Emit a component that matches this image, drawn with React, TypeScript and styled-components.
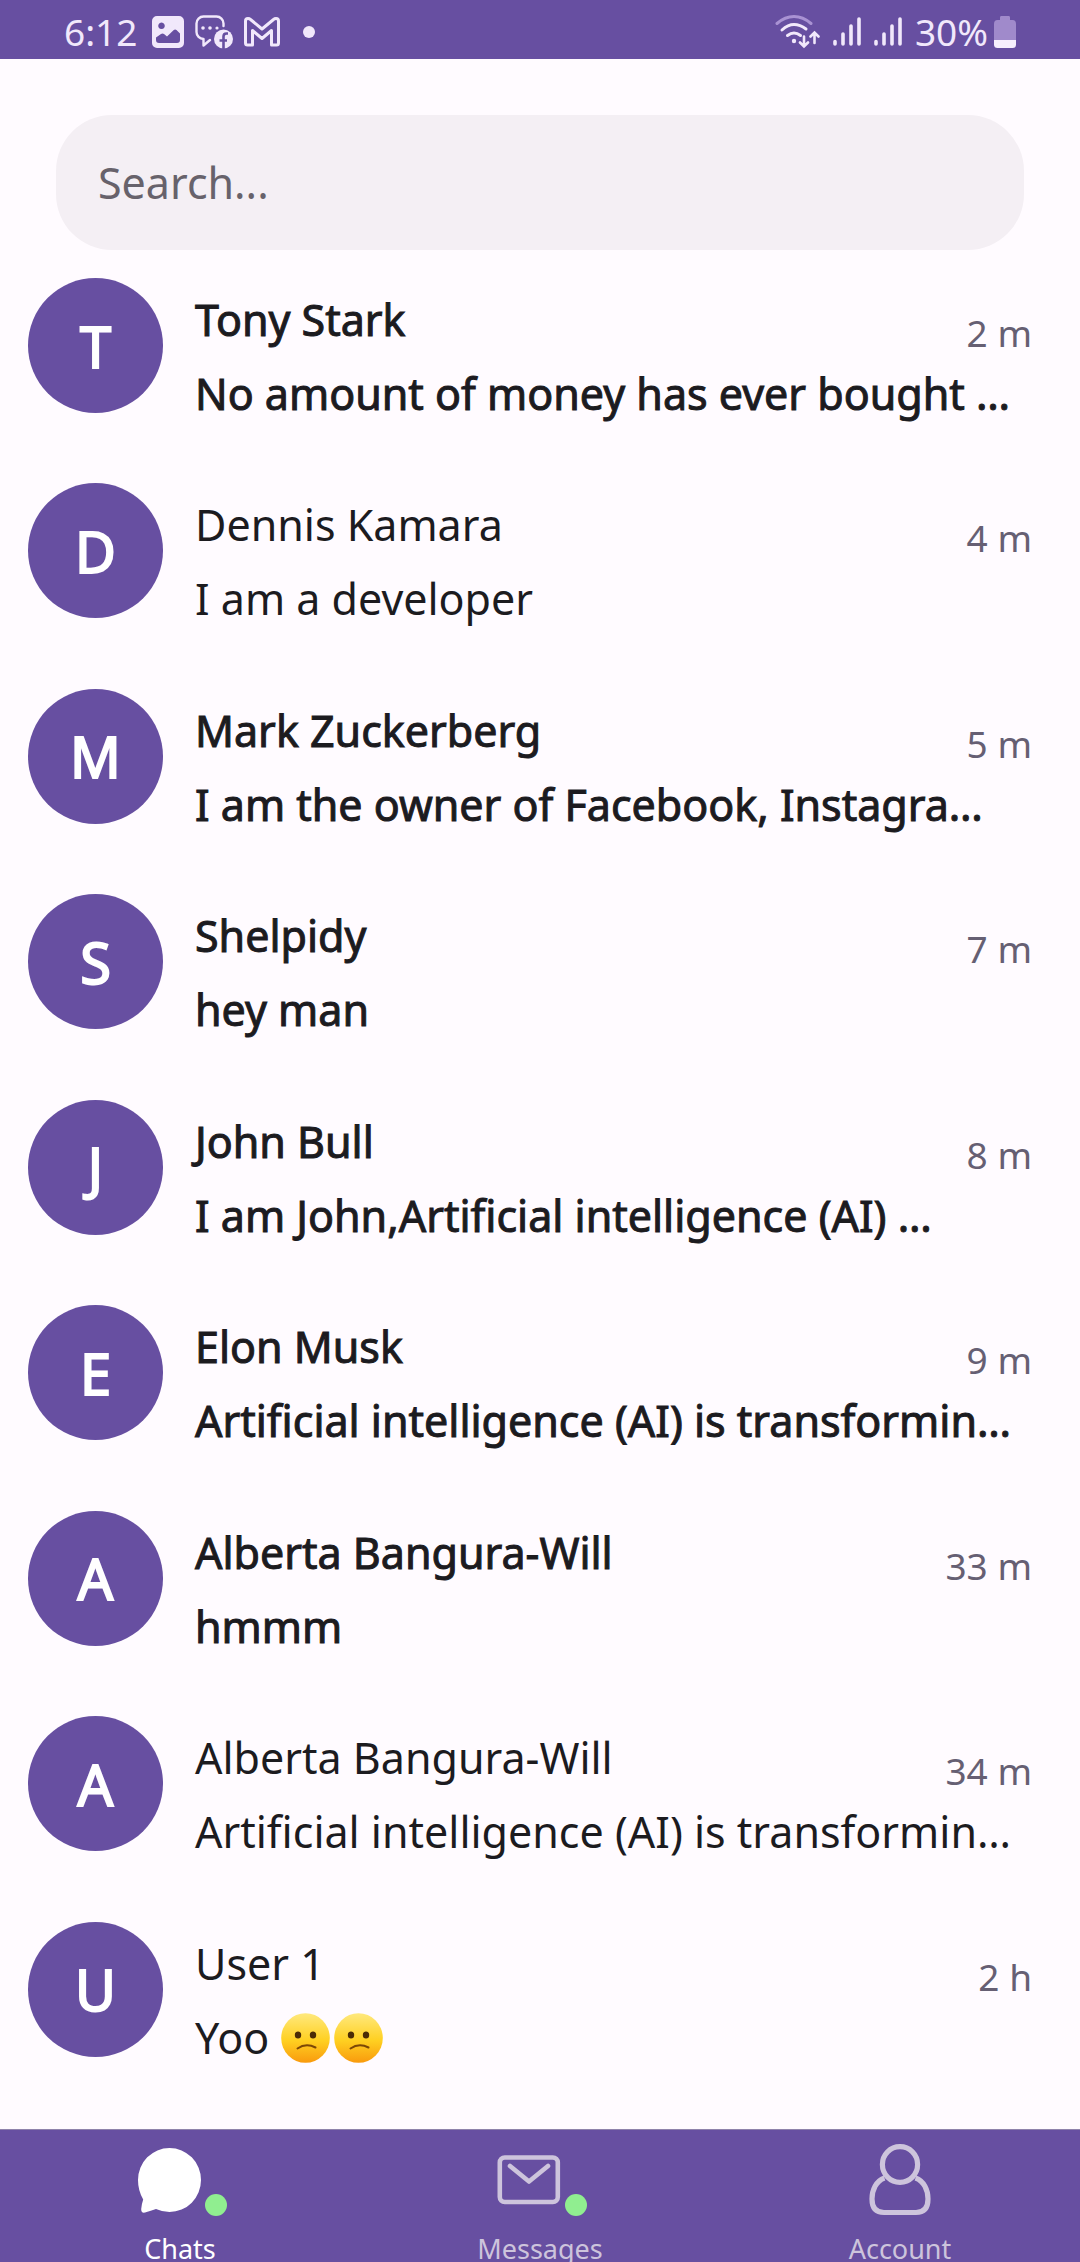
import React from "react";
import styled, { createGlobalStyle } from "styled-components";

const color = {
  primary: "#674fa1",
  surface: "#fffbff",
  field: "#f4eff4",
  text: "#1c1b1f",
  muted: "#665f73",
  placeholder: "#67626b",
  status: "#f1e8fb",
  inactive: "#cdc4dc",
  badge: "#90ee90",
};

const GlobalStyle = createGlobalStyle`
  * { box-sizing: border-box; }
  body {
    margin: 0;
    background: ${color.surface};
    color: ${color.text};
    font-family: "Noto Sans", "Open Sans", sans-serif;
  }
`;

const Screen = styled.div`
  display: flex;
  flex-direction: column;
  height: 100vh;
  overflow: hidden;
`;

const StatusBar = styled.header`
  flex: none;
  display: flex;
  justify-content: space-between;
  align-items: center;
  height: 59px;
  padding: 4px 64px 0;
  background: ${color.primary};
  color: ${color.status};
  font-size: 37px;
  line-height: 52px;
`;

const StatusGroup = styled.div<{ $gap: number }>`
  display: flex;
  align-items: center;
  gap: ${(p) => p.$gap}px;

  svg {
    display: block;
  }
`;

const Clock = styled.time`
  margin-right: 4px;
`;

const MoreDot = styled.span`
  width: 12px;
  height: 12px;
  margin-left: 12px;
  border-radius: 50%;
  background: ${color.status};
`;

const SearchForm = styled.form`
  flex: none;
  padding: 56px 56px 28px;
`;

const SearchInput = styled.input`
  display: block;
  width: 100%;
  height: 135px;
  padding: 0 42px;
  border: 0;
  border-radius: 56px;
  outline: 0;
  background: ${color.field};
  color: ${color.text};
  font-family: inherit;
  font-size: 43px;

  &::placeholder {
    color: ${color.placeholder};
    opacity: 1;
  }
`;

const ChatList = styled.ul`
  flex: 1;
  display: flex;
  flex-direction: column;
  min-height: 0;
  margin: 0;
  padding: 0 0 2px;
  list-style: none;
`;

const ChatItem = styled.li`
  flex: 1;
`;

const ChatLink = styled.a`
  display: flex;
  gap: 32px;
  padding: 0 48px 0 28px;
  color: inherit;
  text-decoration: none;
`;

const Avatar = styled.span`
  flex: none;
  display: grid;
  place-items: center;
  width: 135px;
  height: 135px;
  border-radius: 50%;
  background: ${color.primary};
  color: #fff;
  font-size: 56px;
  line-height: 76px;
  -webkit-text-stroke: 2px #fff;
`;

const ChatBody = styled.span<{ $unread: boolean }>`
  flex: 1;
  min-width: 0;
  padding-top: 5px;
  font-size: 43px;
  line-height: 74px;
  white-space: nowrap;
  -webkit-text-stroke: ${(p) => (p.$unread ? "1px" : "0")} ${color.text};
`;

const ChatHeader = styled.span`
  display: flex;
  justify-content: space-between;
`;

const ChatTime = styled.time`
  align-self: flex-end;
  color: ${color.muted};
  font-size: 37px;
  line-height: 48px;
  -webkit-text-stroke: 0;
`;

const Message = styled.span`
  display: flex;
  align-items: center;
`;

const EmojiRow = styled.span`
  display: flex;
  gap: 4px;
  margin-left: 12px;
`;

const Nav = styled.nav`
  flex: none;
  display: flex;
  height: 133px;
  border-top: 1px solid #8f83ab;
  background: ${color.primary};
`;

const NavButton = styled.button<{ $active: boolean }>`
  flex: 1;
  display: flex;
  flex-direction: column;
  align-items: center;
  justify-content: flex-start;
  gap: 20px;
  padding: 14px 0 0;
  border: 0;
  background: none;
  color: ${(p) => (p.$active ? "#fff" : color.inactive)};
  font-family: inherit;
  font-size: 27px;
  line-height: 26px;
`;

const NavIcon = styled.span`
  display: flex;
  align-items: flex-end;

  svg {
    display: block;
  }
`;

const NavBadge = styled.span`
  width: 22px;
  height: 22px;
  border-radius: 50%;
  background: ${color.badge};
`;

const PictureIcon = () => (
  <svg width="32" height="32" viewBox="0 0 32 32" aria-hidden="true">
    <path
      fill={color.status}
      fillRule="evenodd"
      d="M5 0h22a5 5 0 0 1 5 5v22a5 5 0 0 1-5 5H5a5 5 0 0 1-5-5V5a5 5 0 0 1 5-5zM9.500 6.500a3.300 3.300 0 1 0 .01 0zM4 21.500v2.500a3 3 0 0 0 3 3h18a3 3 0 0 0 3-3v-6.500l-3.500-3.500q-1.500-1.200-3 .3L15 20.500l-3-2.500q-1.500-1-3 0z"
    />
  </svg>
);

const ChatFacebookIcon = () => (
  <svg width="38" height="34" viewBox="0 0 38 34" aria-hidden="true">
    <path
      d="M28.500 11V8.500a7 7 0 0 0-7-7H8.500a7 7 0 0 0-7 7v8.500a7 7 0 0 0 7 7v6.500l6.500-5.500"
      fill="none"
      stroke={color.status}
      strokeWidth="2.400"
      strokeLinecap="round"
      strokeLinejoin="round"
    />
    <g fill={color.status}>
      <circle cx="8" cy="13" r="1.800" />
      <circle cx="15" cy="13" r="1.800" />
      <circle cx="22" cy="13" r="1.600" />
      <circle cx="28.500" cy="24" r="9.500" />
    </g>
    <path
      d="M33 18.500h-1.500q-3 0-3 3V34M24.500 25.500h7.500"
      fill="none"
      stroke={color.primary}
      strokeWidth="2.600"
    />
  </svg>
);

const MailLogoIcon = () => (
  <svg width="36" height="30" viewBox="0 0 36 30" aria-hidden="true">
    <path
      d="M1.500 26V4q0-2.500 2.500-2.500 1.500 0 2.500 1l11.500 9.500 11.500-9.500q1-1 2.500-1 2.500 0 2.500 2.500v22q0 2-2 2h-5V13.500L18 21.500 8.500 13.500V28h-5q-2 0-2-2z"
      fill="none"
      stroke={color.status}
      strokeWidth="3"
      strokeLinejoin="round"
    />
  </svg>
);

const WifiIcon = () => (
  <svg width="45" height="34" viewBox="0 0 45 34" aria-hidden="true">
    <g fill="none" strokeLinecap="round" stroke={color.status} strokeWidth="3">
      <path d="M2 8.500Q10 1.500 19 1.500T36 8.500" stroke="#a992d3" />
      <path d="M7 15q6-5.500 12-5.500T31 14" />
      <path d="M12.500 20.500q6.500-5 13 0" />
      <path d="M29 21.500V31M25 27.500l4 4 4-4M39.500 28V18M35.500 21.500l4-4 4 4" strokeWidth="2.600" />
    </g>
    <circle cx="19" cy="26" r="2.200" fill={color.status} />
  </svg>
);

const SignalIcon = () => (
  <svg width="28" height="30" viewBox="0 0 28 30" aria-hidden="true">
    <path
      d="M2 24.500V27M10 17V27M18 9V27M26 2V27"
      stroke={color.status}
      strokeWidth="3.600"
      strokeLinecap="round"
    />
  </svg>
);

const BatteryIcon = () => (
  <svg width="22" height="32" viewBox="0 0 22 32" aria-hidden="true">
    <path
      d="M7 0h8q1 0 1 1.500V4h2.500Q22 4 22 8v16H0V8q0-4 3.500-4H6V1.500Q6 0 7 0z"
      fill="#a08acb"
    />
    <path d="M0 24h22v4.500q0 3.500-3.500 3.500h-15Q0 32 0 28.500z" fill="#f6effd" />
  </svg>
);

const ChatsIcon = () => (
  <svg width="72" height="72" viewBox="0 0 72 72" aria-hidden="true">
    <path
      d="M36.500 4a31.500 32 0 1 1 0 64q-7 0-13.500-3-5 1.500-11 3.500-4 .8-3.800-3.500.3-4.500 2-9.500Q5 46.500 5 36A31.500 32 0 0 1 36.500 4z"
      fill="currentColor"
    />
  </svg>
);

const EnvelopeIcon = () => (
  <svg width="72" height="72" viewBox="0 0 72 72" aria-hidden="true">
    <g fill="none" stroke="currentColor" strokeWidth="4.600" strokeLinecap="round" strokeLinejoin="round">
      <rect x="6.800" y="13.500" width="58" height="44.500" rx="5" />
      <path d="M17 22l19 15.500L55 22" />
    </g>
  </svg>
);

const PersonIcon = () => (
  <svg width="72" height="72" viewBox="0 0 72 72" aria-hidden="true">
    <g fill="none" stroke="currentColor" strokeWidth="5.200">
      <ellipse cx="36" cy="20.500" rx="17.600" ry="17.800" />
      <path d="M20.500 34C12 37 8 46 8 55q0 13.500 12 13.500h32Q64 68.500 64 55C64 46 60 37 51.500 34" />
    </g>
  </svg>
);

const ConfusedFace = ({ id }: { id: string }) => (
  <svg width="49" height="50" viewBox="0 0 49 50" role="img" aria-label="😕">
    <defs>
      <linearGradient id={id} x1="0" y1="0" x2="0" y2="1">
        <stop offset="0" stopColor="#ffe97e" />
        <stop offset="0.550" stopColor="#ffd021" />
        <stop offset="1" stopColor="#f99a0d" />
      </linearGradient>
    </defs>
    <ellipse cx="24.500" cy="25" rx="24.300" ry="24.800" fill={`url(#${id})`} />
    <ellipse cx="17" cy="22" rx="3.200" ry="3.600" fill="#4b2c06" />
    <ellipse cx="32" cy="22" rx="3.200" ry="3.600" fill="#4b2c06" />
    <path d="M16.500 35.500q8.500-6 18-1" fill="none" stroke="#7b4706" strokeWidth="2" strokeLinecap="round" />
  </svg>
);

type Chat = {
  name: string;
  message: string;
  time: string;
  unread: boolean;
  faces?: number;
};

const chats: Chat[] = [
  { name: "Tony Stark", message: "No amount of money has ever bought …", time: "2 m", unread: true },
  { name: "Dennis Kamara", message: "I am a developer", time: "4 m", unread: false },
  { name: "Mark Zuckerberg", message: "I am the owner of Facebook, Instagra…", time: "5 m", unread: true },
  { name: "Shelpidy", message: "hey man", time: "7 m", unread: true },
  { name: "John Bull", message: "I am John,Artificial intelligence (AI) …", time: "8 m", unread: true },
  { name: "Elon Musk", message: "Artificial intelligence (AI) is transformin…", time: "9 m", unread: true },
  { name: "Alberta Bangura-Will", message: "hmmm", time: "33 m", unread: true },
  { name: "Alberta Bangura-Will", message: "Artificial intelligence (AI) is transformin…", time: "34 m", unread: false },
  { name: "User 1", message: "Yoo", time: "2 h", unread: false, faces: 2 },
];

const tabs = [
  { label: "Chats", Icon: ChatsIcon, badge: true, active: true },
  { label: "Messages", Icon: EnvelopeIcon, badge: true, active: false },
  { label: "Account", Icon: PersonIcon, badge: false, active: false },
];

export default function App() {
  return (
    <Screen>
      <GlobalStyle />
      <StatusBar>
        <StatusGroup $gap={11}>
          <Clock>6:12</Clock>
          <PictureIcon />
          <ChatFacebookIcon />
          <MailLogoIcon />
          <MoreDot />
        </StatusGroup>
        <StatusGroup $gap={13}>
          <WifiIcon />
          <SignalIcon />
          <SignalIcon />
          <StatusGroup $gap={6}>
            <span>30%</span>
            <BatteryIcon />
          </StatusGroup>
        </StatusGroup>
      </StatusBar>
      <SearchForm role="search">
        <SearchInput type="text" aria-label="Search" placeholder="Search..." />
      </SearchForm>
      <ChatList>
        {chats.map((chat, i) => (
          <ChatItem key={i}>
            <ChatLink href="#">
              <Avatar>{chat.name[0]}</Avatar>
              <ChatBody $unread={chat.unread}>
                <ChatHeader>
                  <span>{chat.name}</span>
                  <ChatTime>{chat.time}</ChatTime>
                </ChatHeader>
                <Message>
                  {chat.message}
                  {chat.faces && (
                    <EmojiRow>
                      {Array.from({ length: chat.faces }, (_, n) => (
                        <ConfusedFace key={n} id={`face-${i}-${n}`} />
                      ))}
                    </EmojiRow>
                  )}
                </Message>
              </ChatBody>
            </ChatLink>
          </ChatItem>
        ))}
      </ChatList>
      <Nav>
        {tabs.map(({ label, Icon, badge, active }) => (
          <NavButton key={label} type="button" $active={active}>
            <NavIcon>
              <Icon />
              {badge && <NavBadge />}
            </NavIcon>
            <span>{label}</span>
          </NavButton>
        ))}
      </Nav>
    </Screen>
  );
}
